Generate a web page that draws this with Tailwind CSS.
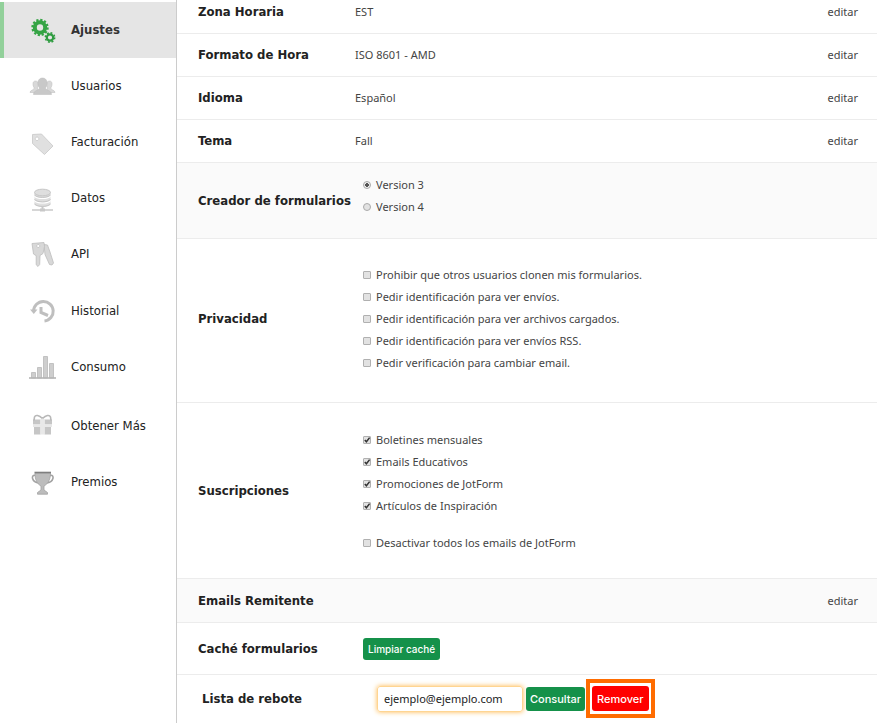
<!DOCTYPE html>
<html lang="es">
<head>
<meta charset="utf-8">
<meta name="viewport" content="width=device-width, initial-scale=1">
<title>Ajustes</title>
<script src="https://cdn.jsdelivr.net/npm/@tailwindcss/browser@4"></script>
</head>
<body class="flex min-h-screen bg-white font-['Noto_Sans',sans-serif] text-[11px] leading-[22px] text-[#444]">

<svg class="hidden" aria-hidden="true">
  <defs>
    <symbol id="check" viewBox="0 0 8 8"><path d="M1.8 4 3.4 5.8 6.6 1.6" fill="none" stroke="#333" stroke-width="1.5"/></symbol>
  </defs>
</svg>

<nav class="w-[177px] shrink-0 border-r border-[#ccc] pt-0.5 font-['DejaVu_Sans_Condensed',sans-serif] text-[13px] text-[#222]" aria-label="Cuenta">
  <a href="#ajustes" aria-current="page" class="flex h-14 items-center gap-3.5 border-l-4 border-[#92d09a] bg-[#e5e5e5] pl-6 font-bold text-[#333]">
    <svg class="size-[29px] shrink-0" viewBox="0 0 29 29" fill="none">
      <circle cx="12" cy="11.500" r="5.200" stroke="#35a445" stroke-width="4"/>
      <circle cx="12" cy="11.500" r="7.600" stroke="#35a445" stroke-width="2.200" stroke-dasharray="2.200 1.780"/>
      <circle cx="22" cy="21.500" r="3.200" stroke="#2f9c40" stroke-width="2.200"/>
      <circle cx="22" cy="21.500" r="4.700" stroke="#2f9c40" stroke-width="1.500" stroke-dasharray="1.900 1.790"/>
    </svg>Ajustes</a>
  <a href="#usuarios" class="flex h-14 items-center gap-3.5 pl-7">
    <svg class="size-[29px] shrink-0" viewBox="0 0 29 29" stroke="#bbb" stroke-width=".5">
      <path d="M2 20.500c0-2.500 4-2.300 4.300-4.500C4.500 13.500 4.200 9 7.500 9s3.500 4 1.800 7c.5 1.500 2 2.300 2 4.500zM27 20.500c0-2.500-4-2.300-4.300-4.500 1.800-2.500 2.100-7-1.200-7s-3.500 4-1.800 7c-.5 1.500-2 2.300-2 4.500z" fill="#d8d8d8"/>
      <path d="M5.500 22.500c0-4.500 5.200-3.500 6-6.500-2.500-3-2.500-10 3-10s5.500 7 3 10c.8 3 6 2 6 6.500z" fill="#c8c8c8"/>
    </svg>Usuarios</a>
  <a href="#facturacion" class="flex h-14 items-center gap-3.5 pl-7">
    <svg class="size-[29px] shrink-0" viewBox="0 0 29 29" fill="#e0e0e0">
      <path fill-rule="evenodd" stroke="#c8c8c8" stroke-width=".8" d="M4.500 6.500l9-.5L25 18l-8.500 8.500L4.500 15.500zM9 9a1.800 1.800 0 1 0 .1 0z"/>
    </svg>Facturación</a>
  <a href="#datos" class="flex h-14 items-center gap-3.5 pl-7">
    <svg class="size-[29px] shrink-0" viewBox="0 0 29 29" fill="#dedede">
      <path d="M6.500 8.500v12c3 3.300 13 3.300 16 0v-12z"/>
      <ellipse cx="14.500" cy="8.500" rx="8" ry="3.300" stroke="#c6c6c6"/>
      <path d="M6.500 12c3 3.200 13 3.200 16 0M6.500 16.500c3 3.200 13 3.200 16 0" fill="none" stroke="#fff" stroke-width="1.300"/>
      <path d="M6.500 11c3 3.200 13 3.200 16 0M6.500 15.500c3 3.200 13 3.200 16 0M6.500 20c3 3.200 13 3.200 16 0" fill="none" stroke="#c4c4c4"/>
      <path d="M4 26h21" stroke="#c0c0c0" stroke-width="1.300"/><path d="M13.500 22.500h2v2h1.500v3h-5v-3h1.500z" fill="#c8c8c8"/>
    </svg>Datos</a>
  <a href="#api" class="flex h-14 items-center gap-3.5 pl-7">
    <svg class="size-[29px] shrink-0" viewBox="0 0 29 29" fill="#d8d8d8" stroke="#bdbdbd" stroke-width=".8">
      <path d="M16 4.500l3.500.5L22 12l3.500 11-1.500 2-2.500-.5-4.500-10z"/>
      <path fill-rule="evenodd" d="M4 3.500l12-1 .5 4-1.500 7-3 2-.3 9-1.700 2-1.800-1.700V15.700L5.500 14zM10.200 4.500a1.500 1.500 0 1 0 .1 0z"/>
    </svg>API</a>
  <a href="#historial" class="mt-px flex h-14 items-center gap-3.5 pl-7">
    <svg class="size-[29px] shrink-0" viewBox="0 0 29 29" fill="none" stroke="#bfbfbf">
      <path d="M5.600 14A9.800 9.800 0 1 1 16.500 24" stroke-width="3"/>
      <path d="M2 12.500h7.500l-3.700 4.500z" fill="#bfbfbf" stroke="none"/>
      <path d="M13 10v5.500l7 3" stroke-width="3"/>
    </svg>Historial</a>
  <a href="#consumo" class="flex h-14 items-center gap-3.5 pl-7">
    <svg class="size-[29px] shrink-0" viewBox="0 0 29 29" fill="#cecece" stroke="#b9b9b9" stroke-width=".8">
      <path d="M3.500 19.500h4V25h-4zM9.500 14.500h4V25h-4zM15.500 3.500h4V25h-4zM21.500 10.500h4V25h-4z"/><path d="M1 25h27" stroke="#b5b5b5" stroke-width="1.600"/>
    </svg>Consumo</a>
  <a href="#obtener-mas" class="mt-[3px] flex h-14 items-center gap-3.5 pl-7">
    <svg class="size-[29px] shrink-0" viewBox="0 0 29 29" fill="#c6c6c6">
      <path d="M5 7.500h7.500v5H5zM16.500 7.500H24v5h-7.500zM6 15h6.500v7.500H6zM16.500 15H23v7.500h-6.500z"/><path d="M12.500 7h4v15.500h-4zM5 12.500h19V15H5z" fill="#e8e8e8"/>
      <path d="M14.500 6.500C11 3 7.500 2.500 6.500 5L6 8.500M14.500 6.500C18 3 21.500 2.500 22.500 5L23 8.500" fill="none" stroke="#b8b8b8" stroke-width="1.600"/>
    </svg>Obtener Más</a>
  <a href="#premios" class="flex h-14 items-center gap-3.5 pl-7">
    <svg class="size-[29px] shrink-0" viewBox="0 0 29 29" fill="#bcbcbc" stroke="#a2a2a2" stroke-width=".8">
      <path d="M7.500 7.500C2.500 6 3.500 14.500 11 15M22 7.500c5-1.500 4 7-3.500 7.500" fill="none" stroke-width="1.600"/>
      <path d="M7 5h15.500c0 6-2 10.500-6.500 13v4l3.500 2.500v1.700h-10v-1.700l3.500-2.500v-4C8.500 15.500 7 11 7 5z"/><path d="M6.500 4.500h16.500" stroke="#7f7f7f" stroke-width="1.600"/>
    </svg>Premios</a>
</nav>

<main class="min-w-0 flex-1">
  <section class="flex items-center border-b border-[#ececec] pb-2.5 pl-[21px] pr-[19px] pt-px">
    <h2 class="w-[157px] shrink-0 whitespace-nowrap font-['DejaVu_Sans_Condensed',sans-serif] text-[13px] font-bold text-[#222]">Zona Horaria</h2>
    <p class="flex-1">EST</p><a href="#zona">editar</a>
  </section>
  <section class="flex items-center border-b border-[#ececec] py-2.5 pl-[21px] pr-[19px]">
    <h2 class="w-[157px] shrink-0 whitespace-nowrap font-['DejaVu_Sans_Condensed',sans-serif] text-[13px] font-bold text-[#222]">Formato de Hora</h2>
    <p class="flex-1">ISO 8601 - AMD</p><a href="#formato">editar</a>
  </section>
  <section class="flex items-center border-b border-[#ececec] py-2.5 pl-[21px] pr-[19px]">
    <h2 class="w-[157px] shrink-0 whitespace-nowrap font-['DejaVu_Sans_Condensed',sans-serif] text-[13px] font-bold text-[#222]">Idioma</h2>
    <p class="flex-1">Español</p><a href="#idioma">editar</a>
  </section>
  <section class="flex items-center border-b border-[#ececec] py-2.5 pl-[21px] pr-[19px]">
    <h2 class="w-[157px] shrink-0 whitespace-nowrap font-['DejaVu_Sans_Condensed',sans-serif] text-[13px] font-bold text-[#222]">Tema</h2>
    <p class="flex-1">Fall</p><a href="#tema">editar</a>
  </section>

  <section class="flex items-center border-b border-[#ececec] bg-[#fafafa] pl-[21px] pr-[19px]">
    <h2 class="w-[157px] shrink-0 whitespace-nowrap font-['DejaVu_Sans_Condensed',sans-serif] text-[13px] font-bold text-[#222]">Creador de formularios</h2>
    <div class="flex-1 pb-5 pl-2 pt-[11px]">
      <label class="flex items-center gap-[5px]"><input type="radio" name="version" checked class="size-2 appearance-none rounded-full border border-[#aaa] bg-[#e2e2e2] checked:bg-[radial-gradient(#555_0_2px,#eee_2px)]">Version 3</label>
      <label class="flex items-center gap-[5px]"><input type="radio" name="version" class="size-2 appearance-none rounded-full border border-[#aaa] bg-[#e2e2e2] checked:bg-[radial-gradient(#555_0_2px,#eee_2px)]">Version 4</label>
    </div>
  </section>

  <section class="flex items-center border-b border-[#ececec] pb-1 pl-[21px] pr-[19px]">
    <h2 class="w-[157px] shrink-0 whitespace-nowrap font-['DejaVu_Sans_Condensed',sans-serif] text-[13px] font-bold text-[#222]">Privacidad</h2>
    <div class="flex-1 pb-6 pl-2 pt-[25px]">
      <label class="flex items-center gap-[5px]"><input type="checkbox" class="size-2 appearance-none rounded-[1px] border border-[#b0b0b0] bg-[#e2e2e2] checked:bg-[#555]">Prohibir que otros usuarios clonen mis formularios.</label>
      <label class="flex items-center gap-[5px]"><input type="checkbox" class="size-2 appearance-none rounded-[1px] border border-[#b0b0b0] bg-[#e2e2e2] checked:bg-[#555]">Pedir identificación para ver envíos.</label>
      <label class="flex items-center gap-[5px]"><input type="checkbox" class="size-2 appearance-none rounded-[1px] border border-[#b0b0b0] bg-[#e2e2e2] checked:bg-[#555]">Pedir identificación para ver archivos cargados.</label>
      <label class="flex items-center gap-[5px]"><input type="checkbox" class="size-2 appearance-none rounded-[1px] border border-[#b0b0b0] bg-[#e2e2e2] checked:bg-[#555]">Pedir identificación para ver envíos RSS.</label>
      <label class="flex items-center gap-[5px]"><input type="checkbox" class="size-2 appearance-none rounded-[1px] border border-[#b0b0b0] bg-[#e2e2e2] checked:bg-[#555]">Pedir verificación para cambiar email.</label>
    </div>
  </section>

  <section class="flex items-center border-b border-[#ececec] pl-[21px] pr-[19px]">
    <h2 class="w-[157px] shrink-0 whitespace-nowrap font-['DejaVu_Sans_Condensed',sans-serif] text-[13px] font-bold text-[#222]">Suscripciones</h2>
    <div class="flex-1 pb-6 pl-2 pt-[26px]">
      <label class="flex items-center gap-[5px]"><span class="grid size-2"><input type="checkbox" checked class="peer col-start-1 row-start-1 size-2 appearance-none rounded-[1px] border border-[#b0b0b0] bg-[#e2e2e2]"><svg class="pointer-events-none invisible col-start-1 row-start-1 size-2 peer-checked:visible"><use href="#check"/></svg></span>Boletines mensuales</label>
      <label class="flex items-center gap-[5px]"><span class="grid size-2"><input type="checkbox" checked class="peer col-start-1 row-start-1 size-2 appearance-none rounded-[1px] border border-[#b0b0b0] bg-[#e2e2e2]"><svg class="pointer-events-none invisible col-start-1 row-start-1 size-2 peer-checked:visible"><use href="#check"/></svg></span>Emails Educativos</label>
      <label class="flex items-center gap-[5px]"><span class="grid size-2"><input type="checkbox" checked class="peer col-start-1 row-start-1 size-2 appearance-none rounded-[1px] border border-[#b0b0b0] bg-[#e2e2e2]"><svg class="pointer-events-none invisible col-start-1 row-start-1 size-2 peer-checked:visible"><use href="#check"/></svg></span>Promociones de JotForm</label>
      <label class="flex items-center gap-[5px]"><span class="grid size-2"><input type="checkbox" checked class="peer col-start-1 row-start-1 size-2 appearance-none rounded-[1px] border border-[#b0b0b0] bg-[#e2e2e2]"><svg class="pointer-events-none invisible col-start-1 row-start-1 size-2 peer-checked:visible"><use href="#check"/></svg></span>Artículos de Inspiración</label>
      <label class="mt-[15px] flex items-center gap-[5px]"><input type="checkbox" class="size-2 appearance-none rounded-[1px] border border-[#b0b0b0] bg-[#e2e2e2] checked:bg-[#555]">Desactivar todos los emails de JotForm</label>
    </div>
  </section>

  <section class="flex items-center justify-between border-b border-[#ececec] bg-[#fafafa] pb-2.5 pl-[21px] pr-[19px] pt-[11px]">
    <h2 class="whitespace-nowrap font-['DejaVu_Sans_Condensed',sans-serif] text-[13px] font-bold text-[#222]">Emails Remitente</h2>
    <a href="#emails">editar</a>
  </section>

  <section class="flex items-center border-b border-[#ececec] pb-3.5 pl-[21px] pr-[19px] pt-[15px]">
    <h2 class="w-[165px] shrink-0 whitespace-nowrap font-['DejaVu_Sans_Condensed',sans-serif] text-[13px] font-bold text-[#222]">Caché formularios</h2>
    <button type="button" class="rounded-[3px] bg-[#15914a] px-[5px] font-['Inter',sans-serif] text-[10px] font-medium text-white">Limpiar caché</button>
  </section>

  <section class="flex items-center pb-1 pl-[25px] pt-1">
    <h2 class="w-[175px] shrink-0 whitespace-nowrap font-['DejaVu_Sans_Condensed',sans-serif] text-[13px] font-bold text-[#222]"><label for="rebote">Lista de rebote</label></h2>
    <input id="rebote" type="email" value="ejemplo@ejemplo.com" class="h-[26px] w-[146px] rounded-[3px] border border-[#ffd591] px-1.5 text-[#222] shadow-[0_0_5px_#ffb84d] outline-none">
    <button type="button" class="ml-[3px] h-6 rounded-[3px] bg-[#15914a] px-1 font-['Inter',sans-serif] font-medium text-white">Consultar</button>
    <div class="ml-px border-4 border-[#ff6c00] px-0.5 py-[3px]">
      <button type="button" class="block h-[25px] rounded-[3px] bg-[#ff0000] px-[5px] font-['Inter',sans-serif] font-medium text-white">Remover</button>
    </div>
  </section>
</main>
</body>
</html>
